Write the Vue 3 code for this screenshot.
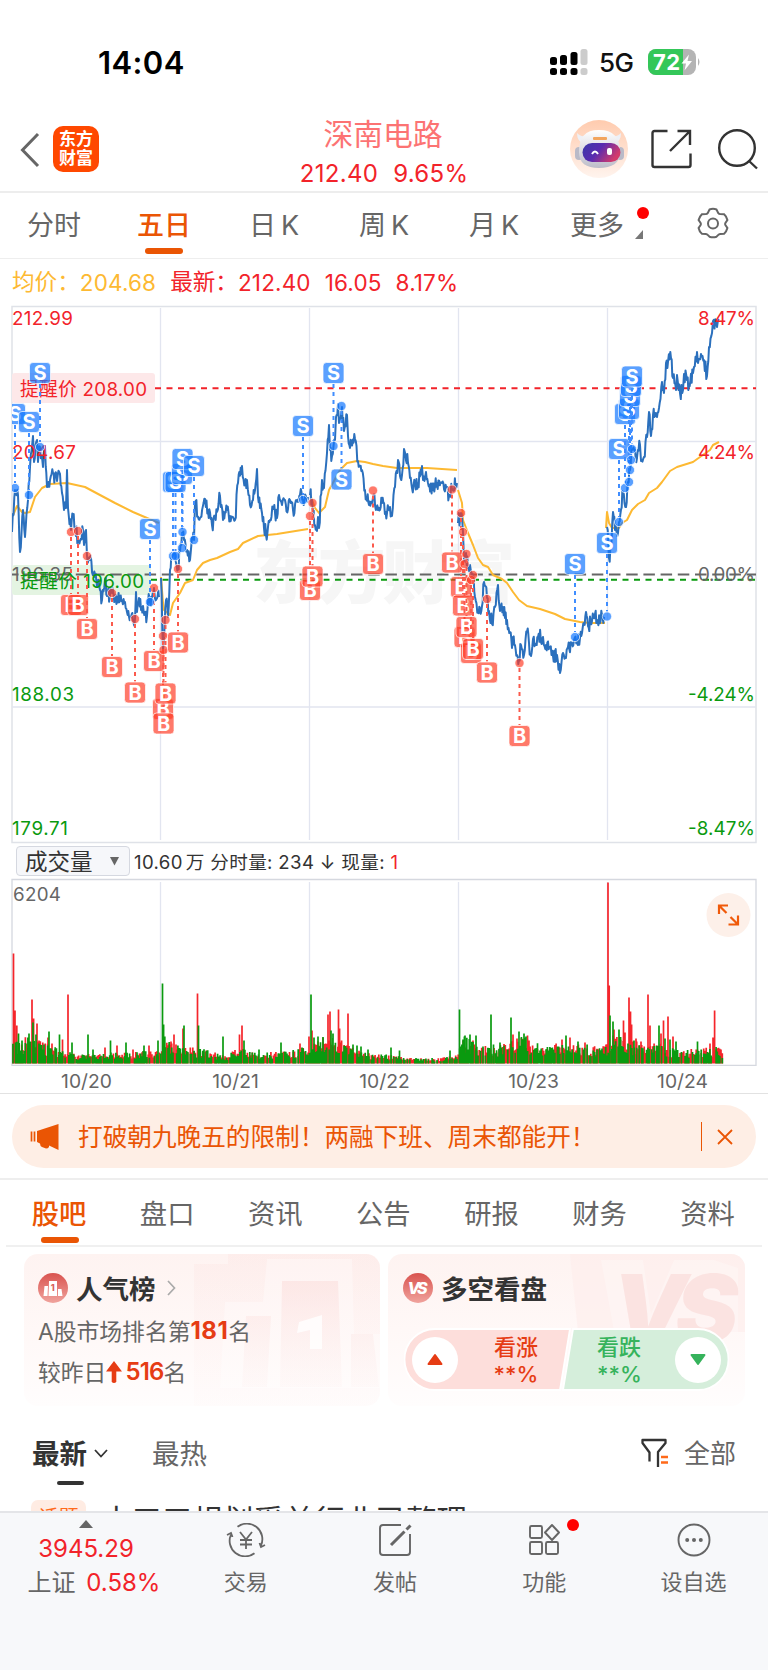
<script setup>
import { ref } from 'vue';

const chartTabs = ['分时', '五日', '日K', '周K', '月K', '更多'];
const activeChart = ref('五日');

const infoTabs = ['股吧', '盘口', '资讯', '公告', '研报', '财务', '资料'];
const activeInfo = ref('股吧');

const dates = ['10/20', '10/21', '10/22', '10/23', '10/24'];
const dayLines = [160.5, 309.5, 458.5, 607.5];

// 固定种子，保证每次绘制一致
const createRandom = (seed) => () => {
  seed = (seed * 16807) % 2147483647;
  return seed / 2147483647;
};

// 每日价格关键点
const priceDays = [
  '12,532 15,490 18,495 20,552 23,510 25,537 28,500 30,467 33,436 34,462 37,440 38,462 40,447 43,467 45,446 47,487 50,480 53,473 57,481 60,474 62,493 64,510 66,508 67,470 68,508 71,530 73,515 78,540 83,530 84,545 86,530 87,556 90,560 95,577 100,590 102,600 105,579 107,596 112,593 115,598 120,597 125,602 127,612 131,617 135,619 136,592 137,612 139,598 141,610 147,616 148,602 152,598 154,588 156,600 159,597',
  '161,578 163,650 166,600 168,617 170,570 172,557 175,553 178,568 182,533 184,540 187,550 190,560 192,537 194,540 195,503 200,518 205,499 208,510 212,525 215,517 220,496 223,520 227,510 230,516 235,520 238,483 242,466 245,485 247,480 250,505 253,500 257,469 258,497 262,513 266,535 270,520 273,509 277,518 279,495 282,505 285,500 288,509 290,500 293,510 298,502 300,495 303,500 308,497',
  '310,495 312,500 313,513 317,531 318,517 319,528 322,480 324,488 327,453 329,425 330,450 332,456 335,440 336,417 338,404 339,423 342,407 344,431 347,415 348,436 350,448 355,439 358,461 362,470 365,490 369,505 373,497 378,510 382,503 387,513 390,507 392,516 395,487 398,460 400,476 402,475 404,449 408,463 412,488 415,482 418,483 422,466 423,480 426,472 428,483 433,490 437,483 442,483 447,487 449,496 452,488 457,483',
  '458,523 461,513 463,532 464,560 466,553 468,568 470,565 473,575 475,597 478,611 482,606 484,582 487,598 489,611 492,624 495,607 498,585 500,611 503,607 505,618 507,620 510,632 512,648 513,637 517,655 519,660 521,645 524,655 527,632 529,643 531,656 533,639 536,645 538,637 543,637 546,645 550,647 553,656 557,655 560,673 563,653 566,658 568,647 572,643 574,640 577,643 580,638 582,633 586,612 588,626 592,621 595,614 597,620 602,615 604,617',
  '607,527 609,558 611,547 613,512 615,530 618,533 619,522 623,493 626,507 628,482 630,470 632,450 635,450 637,458 640,445 641,461 644,457 647,437 649,412 651,436 653,415 657,417 659,408 662,382 664,393 666,363 671,358 673,378 676,390 677,375 680,393 683,390 684,374 687,380 689,385 693,373 694,367 697,352 698,363 701,354 704,360 707,376 709,347 712,333 713,321 716,322 717,327 719,320',
];

const averageDays = [
  '12,517 14,513 17,506 22,512 25,513 30,512 35,497 42,488 50,484 67,483 85,487 100,495 115,503 133,512 147,518 159,523',
  '161,577 163,603 164,610 170,615 173,603 180,593 185,583 193,580 197,570 203,563 210,560 217,558 230,552 238,549 243,543 258,536 277,534 308,529',
  '311,497 315,508 319,513 325,507 329,490 340,470 347,463 357,461 365,462 373,464 383,466 397,468 427,468 457,470',
  '458,490 462,503 463,520 468,533 473,545 478,558 483,565 488,567 493,575 502,579 507,583 513,592 519,600 527,606 540,609 555,614 565,619 580,622 590,623 605,623',
  '606,528 607,512 609,523 612,528 619,528 622,523 627,520 632,510 638,504 645,500 649,493 657,488 662,482 670,471 677,467 693,462 700,457 710,450 713,445 719,442',
];

const parsePoints = (text) => text.split(' ').map((p) => p.split(',').map(Number));

// 在关键点之间补充分钟级波动
const pricePaths = priceDays.map((day, index) => {
  const random = createRandom(97 + index * 31);
  const points = parsePoints(day);
  const result = [points[0]];
  for (let i = 1; i < points.length; i++) {
    const [x0, y0] = points[i - 1];
    const [x1, y1] = points[i];
    const steps = Math.max(1, Math.round((x1 - x0) / 0.7));
    for (let s = 1; s < steps; s++) {
      const t = s / steps;
      const jitter = (random() - 0.5) * 15;
      result.push([x0 + (x1 - x0) * t, y0 + (y1 - y0) * t + jitter]);
    }
    result.push([x1, y1]);
  }
  return result.map(([x, y]) => `${x.toFixed(1)},${y.toFixed(1)}`).join(' ');
});

// 买卖点: [x, 标签y, 圆点y]
const sellMarks = [
  [15, 414, 488], [29, 422, 495], [40, 373, 447], [150, 529, 602],
  [173, 482, 556], [175.5, 482, 556], [182, 474, 548], [182.5, 459, 532], [194, 466, 540],
  [303, 426, 500], [333.5, 373, 446], [341.5, 479.5, 406],
  [575, 564, 637], [607, 543, 616.5], [619, 449, 522],
  [625, 414, 488], [629, 409, 482], [630, 396, 470], [631, 386, 460], [632, 376.5, 449],
];
const buyMarks = [
  [71, 605, 532], [78, 605, 531], [87, 629, 556], [112, 667, 593], [135, 692.5, 619],
  [154, 661, 588], [163, 709, 636], [163.5, 723.5, 650], [165.5, 693.5, 620], [178, 642.5, 569],
  [310, 590, 516], [312.5, 576.5, 503], [373, 564, 490.5], [452, 562.5, 489.5],
  [461, 587, 513], [463, 605.5, 532], [464.5, 637, 564], [466.5, 627, 554],
  [471, 653, 580], [473, 649, 575], [487, 672.5, 599], [519.5, 736, 663],
];

// 成交量峰值: [x, 高度]
const redSpikes = [
  [13.5, 110], [15, 53], [16.8, 38], [32, 64], [33.6, 45], [37, 40], [48, 26], [52, 20], [62.5, 24], [68, 69],
  [105, 16], [117, 18], [133, 14], [149, 18], [171, 22], [174, 29], [176, 19], [183, 35], [197.5, 70],
  [239.5, 29], [242, 38], [300, 20], [309, 27], [312, 33], [323, 26], [328, 49], [330, 52], [338.5, 54], [339.6, 35], [348, 50],
  [513, 29], [517, 25], [527.5, 28], [529, 23], [562, 24], [570, 26], [585, 21], [606, 19],
  [608, 181], [609.2, 78], [614, 34], [623.5, 43], [625, 31], [629, 66], [630.5, 52], [631.6, 39], [636, 25], [641, 22],
  [648, 69], [650, 38], [661, 30], [663.5, 43], [668, 47], [673, 27], [710, 20], [713, 26], [714.6, 53], [716, 14], [721, 14],
];
const greenSpikes = [
  [18.5, 30], [22, 23], [29, 30], [33, 41], [36, 29], [49, 32], [59.5, 29], [72, 21], [88, 29], [93, 14], [110.5, 23], [126, 21],
  [144, 18], [158, 23], [162.5, 80], [163.6, 39], [164.8, 27], [184, 38], [198.5, 38], [223, 27], [244, 23], [259, 14], [281, 21], [302, 16],
  [311, 69], [314, 26], [318, 27], [331, 33], [333, 30], [353, 19], [357, 18], [361, 17], [368, 14], [391, 16], [399.5, 13], [450, 13],
  [459.5, 54], [463, 24], [465, 28], [470, 29], [476, 28], [491, 49], [493.5, 19], [500, 21], [511, 46], [519, 32], [524, 30], [526, 27],
  [566, 28], [578, 22], [610, 48], [613, 42], [619, 34], [634, 23], [659, 38], [665, 25], [670, 24], [676, 22], [697.5, 22],
];
// 各时段平均量
const volumeLevels = parsePoints(
  '12,22 30,25 45,19 60,13 80,8 110,10 140,12 160,12 166,21 180,16 200,15 225,7 240,15 260,9 290,13 309,15 322,26 340,22 360,11 390,8 420,5 440,5 457,8 464,25 490,14 505,18 520,25 545,18 570,19 605,16 612,28 635,20 655,20 680,13 700,14 718,16 724,10'
);

const levelAt = (x) => {
  const i = volumeLevels.findIndex((p) => p[0] > x);
  const [x0, y0] = volumeLevels[i - 1];
  const [x1, y1] = volumeLevels[i];
  return y0 + ((y1 - y0) * (x - x0)) / (x1 - x0);
};

const bar = (x, h) => `M${x.toFixed(1)} 1063.5V${(1063.5 - h).toFixed(1)}`;

const buildBars = (seed, density, spikes) => {
  const random = createRandom(seed);
  let path = '';
  for (let x = 13; x < 722.5; x += 1.24) {
    const value = random();
    const height = random();
    if (value < density) {
      path += bar(x, levelAt(x) * (0.4 + height * 0.7));
    }
  }
  return path + spikes.map(([x, h]) => bar(x, h)).join('');
};
const redBars = buildBars(811, 0.92, redSpikes);
const greenBars = buildBars(4027, 0.72, greenSpikes);
</script>

<template>
  <div class="page">
    <div class="status-bar">
      <span class="clock">14:04</span>
      <div class="status-right">
        <svg width="38" height="28" viewBox="0 0 38 28">
          <g fill="#000">
            <rect x="0" y="9" width="7" height="8" rx="2.5" />
            <rect x="10" y="7" width="7" height="10" rx="2.5" />
            <rect x="20.5" y="4" width="7" height="13" rx="2.5" />
            <rect x="0" y="20" width="7" height="7" rx="2.5" />
            <rect x="10" y="20" width="7" height="7" rx="2.5" />
            <rect x="20.5" y="20" width="7" height="7" rx="2.5" />
          </g>
          <g fill="#ccc">
            <rect x="30.5" y="1" width="7" height="16" rx="2.5" />
            <rect x="30.5" y="20" width="7" height="7" rx="2.5" />
          </g>
        </svg>
        <span class="network">5G</span>
        <svg width="54" height="28" viewBox="0 0 54 28">
          <rect x="0" y="1" width="48" height="26" rx="8" fill="#b4b4b4" />
          <path d="M8 1h27v26H8a8 8 0 0 1-8-8V9a8 8 0 0 1 8-8z" fill="#34c759" />
          <path d="M50 10q3 4 0 8z" fill="#b4b4b4" />
          <text x="5" y="21.5" class="battery-text" textLength="27">72</text>
          <path d="M41 6.5 33.5 15.5h4.5l-1.5 7 7.5-9.5h-4.5z" fill="#fff" />
        </svg>
      </div>
    </div>

    <header class="header">
      <svg class="back" width="22" height="36" viewBox="0 0 22 36">
        <path d="M19 2 3.5 18 19 34" fill="none" stroke="#666" stroke-width="3" />
      </svg>
      <div class="brand"><span>东方</span><span>财富</span></div>
      <div class="stock">
        <div class="stock-name">深南电路</div>
        <div class="stock-price"><span>212.40</span><span>9.65%</span></div>
      </div>
      <div class="header-actions">
        <svg width="58" height="58" viewBox="0 0 58 58">
          <defs>
            <linearGradient id="robotBg" x1="0" y1="0" x2="0" y2="1">
              <stop offset="0" stop-color="#ffcbae" />
              <stop offset="1" stop-color="#fff4ee" />
            </linearGradient>
            <linearGradient id="robotFace" x1="0" y1="0" x2="1" y2="0.4">
              <stop offset="0" stop-color="#3a3aa8" />
              <stop offset="0.5" stop-color="#5a2bb0" />
              <stop offset="1" stop-color="#d23a6c" />
            </linearGradient>
            <linearGradient id="robotHead" x1="0" y1="0" x2="0" y2="1">
              <stop offset="0" stop-color="#fff" />
              <stop offset="1" stop-color="#bdbdc9" />
            </linearGradient>
          </defs>
          <circle cx="29" cy="29" r="29" fill="url(#robotBg)" />
          <path d="M7 13q0 8 6 10l6-8q-8 3-12-2zM51 13q0 8-6 10l-6-8q8 3 12-2z" fill="#eef0f6" />
          <rect x="5" y="27" width="8" height="13" rx="4" fill="#b9bac8" />
          <rect x="46" y="27" width="8" height="13" rx="4" fill="#b9bac8" />
          <path d="M9 32c0-15 6-22 20-22s21 7 21 22c0 11-8 16-21 16S9 43 9 32z" fill="url(#robotHead)" />
          <rect x="12.500" y="23" width="38" height="19" rx="9.500" fill="url(#robotFace)" />
          <rect x="23" y="17" width="14" height="3" rx="1" fill="#f2a55e" />
          <path d="M22 34q3-5 6 0" fill="none" stroke="#fff" stroke-width="2" />
          <rect x="37" y="28" width="5" height="7" rx="2" fill="#fff" />
        </svg>
        <svg class="share" width="42" height="42" viewBox="0 0 42 42" fill="none" stroke="#333" stroke-width="2.4">
          <path d="M17.500 3H4.500q-2 0-2 2v32q0 2 2 2h34q2 0 2-2V25.500" />
          <path d="M27.500 3h12.500v14M40 3 20 23" />
        </svg>
        <svg class="search" width="42" height="42" viewBox="0 0 42 42" fill="none" stroke="#333" stroke-width="2.4">
          <circle cx="20" cy="20" r="17.8" />
          <path d="m31.500 32.500 8.500 8" />
        </svg>
      </div>
    </header>

    <nav class="chart-tabs">
      <div
        v-for="tab in chartTabs"
        :key="tab"
        :class="['chart-tab', { active: activeChart === tab }]"
        @click="activeChart = tab"
      >
        <span v-if="tab.endsWith('K')">{{ tab[0] }}<i>K</i></span>
        <span v-else>{{ tab }}</span>
        <template v-if="tab === '更多'">
          <b class="more-dot"></b>
          <svg class="more-arrow" width="8" height="9" viewBox="0 0 8 9"><path d="M8 0v9H0z" fill="#777" /></svg>
        </template>
      </div>
      <div class="chart-tab">
        <svg width="32" height="32" viewBox="0 0 32 32" fill="none" stroke="#666" stroke-width="2">
          <path d="M12.500 2.500q3.500-1.300 7 0l1.800 3.600q.7.900 1.800 1l4 .2q2.600 2.300 3.300 5.700l-2 3q-.5 1 0 2l2 3q-.9 3.500-3.300 5.700l-4 .2q-1.100.1-1.800 1l-1.800 1.800q-3.500 1.300-7 0l-1.800-1.800q-.7-.9-1.800-1l-4-.2Q2.300 24.500 1.600 21l2-3q.5-1 0-2l-2-3Q2.500 9.600 4.900 7.300l4-.2q1.100-.1 1.800-1z" />
          <circle cx="16" cy="16.500" r="5" />
        </svg>
      </div>
    </nav>

    <div class="quote-row">
      <span class="label avg">均价：</span><span class="avg num">204.68</span>
      <span class="label now">最新：</span><span class="now num">212.40</span>
      <span class="now num">16.05</span><span class="now num">8.17%</span>
    </div>

    <svg class="price-chart" width="768" height="544" viewBox="0 300 768 544">
      <defs>
        <clipPath id="plot"><rect x="12" y="306" width="744" height="537" /></clipPath>
      </defs>
      <text x="253" y="598" class="watermark" textLength="262">东方财富</text>
      <path d="M12 306.500H756V842.500H12z" fill="none" stroke="#dfe2e8" stroke-width="1.500" />
      <path v-for="x in dayLines" :key="x" :d="`M${x} 308V840`" stroke="#e2e5f0" stroke-width="1.300" />
      <path d="M12 441.500H756M12 707H756" stroke="#e2e5f0" stroke-width="1.500" />

      <rect x="12" y="373" width="143" height="30" rx="3" fill="#fde8e9" />
      <rect x="12" y="565" width="139" height="30" rx="3" fill="#e4f4e2" />
      <path d="M12 574.500H756" stroke="#666" stroke-width="2" stroke-dasharray="11.500 5.700" stroke-dashoffset="5" />
      <path d="M155 388.300H756" stroke="#f2232a" stroke-width="2" stroke-dasharray="6 5.500" />
      <path d="M151 579.800H756" stroke="#0a9a0f" stroke-width="2" stroke-dasharray="6 5.500" />

      <g clip-path="url(#plot)" fill="none" stroke-linejoin="round">
        <polyline v-for="(day, i) in averageDays" :key="'a' + i" :points="day" stroke="#fdb932" stroke-width="2" />
        <polyline v-for="(day, i) in pricePaths" :key="'p' + i" :points="day" stroke="#2b70bd" stroke-width="2" />
      </g>

      <g class="axis red">
        <text x="12" y="325" textLength="61">212.99</text>
        <text x="12" y="459" textLength="64">204.67</text>
        <text x="755" y="325" text-anchor="end" textLength="57">8.47%</text>
        <text x="755" y="459" text-anchor="end" textLength="57">4.24%</text>
        <text x="20" y="396" textLength="127">提醒价 208.00</text>
      </g>
      <g class="axis gray">
        <text x="12" y="580.500" textLength="61">196.35</text>
        <text x="755" y="580.500" text-anchor="end" textLength="57">0.00%</text>
      </g>
      <g class="axis green">
        <text x="20" y="588" textLength="124">提醒价 196.00</text>
        <text x="12" y="701" textLength="62">188.03</text>
        <text x="12" y="835" textLength="56">179.71</text>
        <text x="755" y="701" text-anchor="end" textLength="67">-4.24%</text>
        <text x="755" y="835" text-anchor="end" textLength="67">-8.47%</text>
      </g>

      <g clip-path="url(#plot)">
        <g v-for="([x, y, dot], i) in buyMarks" :key="'b' + i" class="mark buy">
          <path :d="`M${x} ${dot + 5}V${y - 11}`" />
          <circle :cx="x" :cy="dot" r="4.600" />
          <rect :x="x - 10.500" :y="y - 10.500" width="21" height="21" rx="3.500" />
          <text :x="x" :y="y + 7.300">B</text>
        </g>
        <g v-for="([x, y, dot], i) in sellMarks" :key="'s' + i" class="mark sell">
          <path :d="y < dot ? `M${x} ${y + 11}V${dot - 5}` : `M${x} ${dot + 5}V${y - 11}`" />
          <circle :cx="x" :cy="dot" r="4.600" />
          <rect :x="x - 10.500" :y="y - 10.500" width="21" height="21" rx="3.500" />
          <text :x="x" :y="y + 7.300">S</text>
        </g>
      </g>
    </svg>

    <div class="volume-row">
      <div class="volume-select">
        <span>成交量</span>
        <svg width="9" height="9" viewBox="0 0 9 9"><path d="M0 0h9L4.500 8.500z" fill="#666" /></svg>
      </div>
      <div class="volume-info">10.60<span class="unit">万</span> 分时量: 234 ↓ 现量: <em>1</em></div>
    </div>

    <svg class="volume-chart" width="768" height="188" viewBox="0 878 768 188">
      <path d="M12 879.500H756V1065.300H12z" fill="none" stroke="#d5d8df" stroke-width="1.300" />
      <path v-for="x in dayLines" :key="x" :d="`M${x} 882V1063`" stroke="#e2e5f0" stroke-width="1.300" />
      <path :d="redBars" stroke="#f5252b" stroke-width="1.700" />
      <path :d="greenBars" stroke="#0a9a0f" stroke-width="1.700" />
      <text x="13" y="900.500" class="volume-max" textLength="48">6204</text>
      <circle cx="728.500" cy="915" r="22" fill="#fdf0e9" />
      <path d="M719 914V905.500h9M719 905.500l7.500 7.500M738 915.500v9h-9.500M738 924.500l-7.500-7.500" fill="none" stroke="#f05a0a" stroke-width="2.200" />
    </svg>

    <div class="date-row">
      <span v-for="date in dates" :key="date">{{ date }}</span>
    </div>

    <div class="banner-wrap">
      <div class="banner">
        <svg width="30" height="28" viewBox="0 0 30 28">
          <path d="M7 8 28.500 1v26L19 22.500V24q-1 1.500-3 1.500l-4-1.500q-2-1-2-3.500L7 19z" fill="#ea5504" />
          <path d="M1.500 8.500v10M4.500 8.500v10" stroke="#ea5504" stroke-width="1.700" />
        </svg>
        <span class="banner-text">打破朝九晚五的限制！两融下班、周末都能开！</span>
        <i class="banner-divider"></i>
        <svg width="16" height="16" viewBox="0 0 16 16"><path d="m1 1 14 14M15 1 1 15" stroke="#ea5504" stroke-width="1.800" /></svg>
      </div>
    </div>

    <nav class="info-tabs">
      <div
        v-for="tab in infoTabs"
        :key="tab"
        :class="['info-tab', { active: activeInfo === tab }]"
        @click="activeInfo = tab"
      >{{ tab }}</div>
    </nav>

    <div class="cards">
      <section class="card rank-card">
        <svg class="card-art" width="356" height="152" viewBox="0 0 356 152">
          <defs>
            <linearGradient id="artFade" x1="0" y1="0" x2="0" y2="1">
              <stop offset="0" stop-color="#fbdcda" stop-opacity="0.55" />
              <stop offset="1" stop-color="#fdeceb" stop-opacity="0.2" />
            </linearGradient>
          </defs>
          <path d="M170 10h34V0h153v152H170z" fill="url(#artFade)" opacity="0.45" />
          <path d="M201 48h38l4-43h85l2 75h27v54H196z" fill="#fff" opacity="0.35" />
          <path d="M222 62h25l-4 71h-25zM258 27h56l4 106h-62zM327 80h22l6 53h-28z" fill="url(#artFade)" />
          <path d="M275 68 298 61v34h-12V76l-13 3z" fill="#fff" opacity="0.8" />
        </svg>
        <div class="card-title">
          <svg width="30" height="30" viewBox="0 0 30 30">
            <defs>
              <linearGradient id="iconRed" x1="0" y1="0" x2="0" y2="1">
                <stop offset="0" stop-color="#d9534f" />
                <stop offset="1" stop-color="#f0a39d" />
              </linearGradient>
            </defs>
            <circle cx="15" cy="15" r="15" fill="url(#iconRed)" />
            <path d="M6.500 13H10l-.5 10H5.500zM11 8h8v15h-8.500zM20 16h3.500l1 7H20z" fill="#fff" />
            <text x="12.700" y="18" class="icon-one">1</text>
          </svg>
          <h3>人气榜</h3>
          <svg class="title-arrow" width="9" height="16" viewBox="0 0 9 16"><path d="m1 1 6.500 7L1 15" fill="none" stroke="#aaa" stroke-width="1.700" /></svg>
        </div>
        <p>A股市场排名第<strong>181</strong>名</p>
        <p>较昨日<svg width="16" height="22" viewBox="0 0 16 22"><path d="M8 0 16 10.500h-5.700V21q-2.300 2-4.600 0V10.500H0z" fill="#e63c14" /></svg><strong class="up">516</strong>名</p>
      </section>

      <section class="card vote-card">
        <svg class="card-art" width="357" height="152" viewBox="0 0 357 152">
          <path d="M182 0h175v78H190z" fill="#fdeceb" opacity="0.6" />
          <path d="M213 6h42l8 54 23-54h40l24 8v64h-46l-50-1h-28z" fill="#fff" opacity="0.25" />
          <text x="224" y="88" class="art-vs" textLength="126">VS</text>
        </svg>
        <div class="card-title">
          <svg width="30" height="30" viewBox="0 0 30 30">
            <circle cx="15" cy="15" r="15" fill="url(#iconRed)" />
            <text x="14.500" y="21" text-anchor="middle" class="icon-vs" textLength="20">VS</text>
          </svg>
          <h3>多空看盘</h3>
        </div>
        <div class="vote">
          <svg class="vote-bg" width="325" height="63" viewBox="0 0 325 63">
            <path d="M31 1H166L156 62H31A30.500 30.500 0 0 1 31 1z" fill="#fddedb" stroke="#fff" stroke-width="1.800" />
            <path d="M169 1H294A30.500 30.500 0 0 1 294 62H159z" fill="#d5eedb" stroke="#fff" stroke-width="1.800" />
          </svg>
          <span class="vote-button"><svg width="16" height="13" viewBox="0 0 16 13"><path d="M8 2 14.500 11h-13z" fill="#e63c14" stroke="#e63c14" stroke-width="2" stroke-linejoin="round" /></svg></span>
          <span class="vote-text bull">看涨<br />**%</span>
          <span class="vote-text bear">看跌<br />**%</span>
          <span class="vote-button"><svg width="16" height="13" viewBox="0 0 16 13"><path d="M8 11 14.500 2h-13z" fill="#36b35c" stroke="#36b35c" stroke-width="2" stroke-linejoin="round" /></svg></span>
        </div>
      </section>
    </div>

    <div class="feed-tabs">
      <span class="feed-active">最新</span>
      <svg class="feed-arrow" width="14" height="9" viewBox="0 0 14 9"><path d="m1 1 6 6.500L13 1" fill="none" stroke="#333" stroke-width="1.800" /></svg>
      <span class="feed-hot">最热</span>
      <svg class="feed-filter" width="28" height="30" viewBox="0 0 28 30" fill="none">
        <path d="M8.500 23.500V14.500L1.500 5V2h23v3L17 14v15" stroke="#333" stroke-width="2.300" stroke-linejoin="round" />
        <path d="M20 19h7M20 24.500h7" stroke="#ff6a1a" stroke-width="2.600" />
      </svg>
      <span class="feed-all">全部</span>
    </div>

    <div class="feed-item">
      <span class="feed-tag">话题</span>
      <span class="feed-title">十五五规划受益行业已整理</span>
    </div>

    <footer class="bottom-bar">
      <div class="index-cell">
        <svg width="14" height="8" viewBox="0 0 14 8"><path d="M7 0l7 8H0z" fill="#666" /></svg>
        <span class="index-value">3945.29</span>
        <span class="index-name">上证 <em>0.58%</em></span>
      </div>
      <div class="nav-cell">
        <svg width="40" height="34" viewBox="0 0 40 34" fill="none" stroke="#666" stroke-width="1.800">
          <path d="M11.500 3.800A15.500 15.500 0 0 1 35 22.500M28.500 30.200A15.500 15.500 0 0 1 5 11.500M1 12l4-2 1.500 4M39 22l-4 2-1.500-4" />
          <path d="m14 9 6 7.500L26 9M20 16.500V26M14 17h12M14 21.500h12" />
        </svg>
        <span>交易</span>
      </div>
      <div class="nav-cell">
        <svg width="34" height="34" viewBox="0 0 34 34" fill="none" stroke="#666" stroke-width="1.900">
          <path d="M23 2H5Q2 2 2 5v24q0 3 3 3h24q3 0 3-3V11" />
          <path d="M13 22 26.500 8.500M28.500 6.500l4-4" stroke-width="3" />
        </svg>
        <span>发帖</span>
      </div>
      <div class="nav-cell">
        <svg width="34" height="34" viewBox="0 0 34 34" fill="none" stroke="#666" stroke-width="1.900">
          <rect x="3" y="3" width="12" height="12" rx="1.500" />
          <rect x="3" y="19" width="12" height="12" rx="1.500" />
          <rect x="19" y="19" width="12" height="12" rx="1.500" />
          <path d="m25 2 7 7.500-7 7.500-7-7.500z" stroke-linejoin="round" />
        </svg>
        <b class="nav-dot"></b>
        <span>功能</span>
      </div>
      <div class="nav-cell">
        <svg width="34" height="34" viewBox="0 0 34 34">
          <circle cx="17" cy="17" r="15.500" fill="none" stroke="#666" stroke-width="1.900" />
          <g fill="#666"><circle cx="10.200" cy="17" r="2" /><circle cx="17" cy="17" r="2" /><circle cx="23.800" cy="17" r="2" /></g>
        </svg>
        <span>设自选</span>
      </div>
    </footer>
  </div>
</template>

<style>
body {
  background: #fff;
}
</style>

<style scoped>
.page {
  width: 768px;
  height: 1670px;
  overflow: hidden;
  background: #fff;
  color: #666;
  font-family: Inter, "Noto Sans CJK SC", sans-serif;
}

.page * {
  box-sizing: border-box;
}

svg {
  display: block;
  flex: none;
}

i,
em {
  font-style: normal;
}

/* 状态栏 */
.status-bar {
  height: 114px;
  padding: 11px 66px 0 98px;
  display: flex;
  align-items: center;
  justify-content: space-between;
}

.clock {
  font-size: 31px;
  font-weight: 600;
  color: #000;
  letter-spacing: 0.4px;
}

.status-right {
  margin-top: -2px;
  display: flex;
  align-items: center;
}

.network {
  margin: 2px 13px 0 11px;
  width: 36px;
  font-size: 26px;
  font-weight: 500;
  letter-spacing: -0.5px;
  color: #111;
}

.battery-text {
  font-size: 22px;
  font-weight: 700;
  fill: #fff;
}

/* 顶部标题 */
.header {
  height: 79px;
  padding: 6px 9px 0 19px;
  display: flex;
  align-items: flex-start;
  border-bottom: 2px solid #ededed;
}

.back {
  margin-top: 12px;
}

.brand {
  width: 46px;
  height: 46px;
  margin: 6px 0 0 12px;
  border-radius: 10px;
  background: #ff4800;
  color: #fff;
  font-size: 17px;
  font-weight: 700;
  line-height: 19px;
  display: flex;
  flex-direction: column;
  align-items: center;
  justify-content: center;
}

.stock {
  width: 200px;
  margin-left: 185px;
  text-align: center;
}

.stock-name {
  height: 40px;
  margin-left: -2px;
  line-height: 28px;
  font-size: 29.8px;
  color: #fc7373;
}

.stock-price {
  display: flex;
  justify-content: center;
  gap: 15px;
  height: 28px;
  line-height: 28px;
  font-size: 24px;
  letter-spacing: 0.3px;
  color: #f2232a;
}

.header-actions {
  margin-left: auto;
  display: flex;
  align-items: center;
}

.share {
  margin-left: 22px;
}

.search {
  margin-left: 25px;
}

/* 周期切换 */
.chart-tabs {
  height: 66px;
  display: grid;
  grid-template-columns: repeat(7, 110px);
  border-bottom: 1px solid #eee;
}

.chart-tab {
  position: relative;
  display: flex;
  align-items: center;
  justify-content: center;
  padding: 0 2px 5px 0;
  font-size: 27px;
}

.chart-tab:nth-child(6) {
  padding-right: 16px;
}

.chart-tab:last-child {
  padding-right: 5px;
}

.chart-tab i {
  margin-left: 5px;
}

.chart-tab.active {
  color: #ea5504;
  font-weight: 500;
}

.chart-tab.active::after {
  content: "";
  position: absolute;
  left: 35px;
  bottom: 4px;
  width: 38px;
  height: 6px;
  border-radius: 3px;
  background: #ea5504;
}

.more-dot {
  position: absolute;
  left: 87px;
  top: 14px;
  width: 12px;
  height: 12px;
  border-radius: 50%;
  background: #f00;
}

.more-arrow {
  position: absolute;
  left: 85px;
  top: 37px;
}

/* 行情摘要 */
.quote-row {
  height: 41px;
  padding: 3px 0 0 12px;
  display: flex;
  align-items: center;
  font-size: 22.6px;
  white-space: nowrap;
}

.quote-row .num {
  margin: 3px 14px 0 0;
  font-size: 22.5px;
  letter-spacing: 0.15px;
}

.quote-row .label {
  height: 33px;
  line-height: 33px;
}

.avg {
  color: #fdb932;
}

.now {
  color: #f2232a;
}

/* 走势图 */
.watermark {
  font-size: 68px;
  font-weight: 900;
  fill: #f6f6f6;
}

.axis text {
  font-size: 18.8px;
}

.axis.red {
  fill: #f2232a;
}

.axis.green {
  fill: #0a9a0f;
}

.axis.gray {
  fill: #666;
}

.mark path {
  fill: none;
  stroke-width: 2;
  stroke-dasharray: 4 4;
}

.mark circle,
.mark rect {
  stroke: #fff;
  stroke-width: 1;
  stroke-opacity: 0.7;
}

.mark text {
  fill: #fff;
  font-size: 20px;
  font-weight: 700;
  text-anchor: middle;
}

.buy path {
  stroke: #fb5a4c;
}

.buy circle,
.buy rect {
  fill: #ff3a24;
  fill-opacity: 0.68;
}

.sell path {
  stroke: #3f8dff;
}

.sell circle,
.sell rect {
  fill: #1478ff;
  fill-opacity: 0.7;
}

/* 成交量 */
.volume-row {
  height: 34px;
  padding: 2px 0 2px 16px;
  display: flex;
  align-items: center;
}

.volume-select {
  width: 114px;
  height: 30px;
  padding: 0 10px 0 8px;
  display: flex;
  align-items: center;
  justify-content: space-between;
  border: 1px solid #d5d8e0;
  border-radius: 4px;
  background: #f6f7fa;
  color: #333;
  font-size: 22.5px;
}

.volume-select span {
  margin-top: -3px;
}

.volume-info {
  margin: -2px 0 0 4px;
  font-size: 18.6px;
  letter-spacing: 0.35px;
  color: #333;
  white-space: pre;
}

.volume-info .unit {
  margin-left: 3px;
}

.volume-info em {
  color: #f2232a;
}

.volume-max {
  font-size: 18.8px;
  fill: #666;
}

.date-row {
  height: 28px;
  padding-left: 12px;
  display: grid;
  grid-template-columns: repeat(5, 149px);
  border-bottom: 1px solid #e2e2e2;
  line-height: 30px;
  font-size: 19.3px;
  text-align: center;
}

/* 活动横幅 */
.banner-wrap {
  height: 86px;
  padding: 11px 12px 0;
  border-bottom: 2px solid #eee;
}

.banner {
  height: 63px;
  padding: 0 23px 0 18px;
  display: flex;
  align-items: center;
  border-radius: 32px;
  background: #feeee5;
  color: #ea5504;
}

.banner-text {
  margin: -3px 0 0 18px;
  font-size: 24.65px;
  white-space: nowrap;
}

.banner-divider {
  width: 1.5px;
  height: 29px;
  margin-left: auto;
  margin-right: 15px;
  background: #ea5504;
}

/* 资讯切换 */
.info-tabs {
  height: 67px;
  margin: 0 6px;
  display: grid;
  grid-template-columns: repeat(7, 108.1px);
  border-bottom: 2px solid #f0f0f0;
}

.info-tab {
  position: relative;
  padding: 15px 2px 0 0;
  line-height: 40px;
  font-size: 27.3px;
  text-align: center;
}

.info-tab.active {
  color: #ea5504;
  font-weight: 500;
}

.info-tab.active::after {
  content: "";
  position: absolute;
  left: 35px;
  bottom: 2px;
  width: 38px;
  height: 6px;
  border-radius: 3px;
  background: #ea5504;
}

/* 卡片 */
.cards {
  height: 160px;
  padding: 7px 23px 0 24px;
  display: grid;
  grid-template-columns: 356px 357px;
  gap: 8px;
}

.card {
  position: relative;
  height: 152px;
  padding: 18px 15px 0;
  overflow: hidden;
  border-radius: 14px;
  background: linear-gradient(180deg, #fef3f1 0%, #fff8f7 50%, #fffdfd 100%);
}

.rank-card {
  padding-left: 14px;
}

.card-art {
  position: absolute;
  left: 0;
  top: 0;
}

.art-vs {
  font-size: 94px;
  font-weight: 900;
  font-style: italic;
  fill: #fbe3e1;
}

.card-title {
  position: relative;
  height: 32px;
  display: flex;
  align-items: center;
}

.card-title h3 {
  margin: -2px 0 0 8px;
  font-size: 26.5px;
  font-weight: 600;
  color: #333;
}

.title-arrow {
  margin-left: 11px;
}

.icon-one {
  font-size: 9px;
  font-weight: 800;
  fill: #d9605c;
}

.icon-vs {
  font-size: 16px;
  font-weight: 800;
  font-style: italic;
  fill: #fff;
}

.card p {
  position: relative;
  height: 41px;
  margin: 0;
  display: flex;
  align-items: center;
  font-size: 22.8px;
}

.card-title + p {
  margin-top: 6px;
}

.card strong {
  font-size: 24px;
  font-weight: 700;
  letter-spacing: 0.5px;
  color: #e63c14;
}

.card strong.up {
  margin-left: 3px;
  font-weight: 600;
  letter-spacing: -0.8px;
}

.vote {
  position: relative;
  width: 325px;
  height: 63px;
  margin: 24px 0 0 1px;
  padding: 0 8px;
  display: grid;
  grid-template-columns: 46px 153px 64px 46px;
  align-items: center;
}

.vote-bg {
  position: absolute;
  left: 0;
  top: 0;
}

.vote-button {
  position: relative;
  width: 46px;
  height: 46px;
  display: flex;
  align-items: center;
  justify-content: center;
  border-radius: 50%;
  background: #fff;
}

.vote-text {
  position: relative;
  padding-top: 2px;
  font-size: 22px;
  line-height: 27px;
  font-weight: 500;
  text-align: center;
}

.bull {
  padding-right: 37px;
  color: #e63c14;
}

.bear {
  padding-right: 46px;
  margin-left: -14px;
  color: #36b35c;
  white-space: nowrap;
}

/* 帖子列表 */
.feed-tabs {
  height: 93px;
  padding: 27px 32px 0 32px;
  display: flex;
  align-items: flex-start;
  font-size: 27.5px;
  line-height: 40px;
}

.feed-active {
  position: relative;
  font-weight: 700;
  color: #333;
}

.feed-active::after {
  content: "";
  position: absolute;
  left: 25px;
  top: 47px;
  width: 27px;
  height: 4px;
  border-radius: 2px;
  background: #333;
}

.feed-arrow {
  margin: 15px 0 0 7px;
}

.feed-hot {
  margin-left: 44px;
}

.feed-filter {
  margin: 4px 15px 0 auto;
}

.feed-all {
  font-size: 26px;
}

.feed-item {
  height: 11px;
  padding-left: 31px;
  display: flex;
  overflow: hidden;
}

.feed-tag {
  width: 55px;
  height: 34px;
  border-radius: 7px;
  background: #ffece3;
  color: #ff6a1a;
  font-size: 20px;
  line-height: 37px;
  text-align: center;
}

.feed-title {
  margin-left: 15px;
  font-size: 30.5px;
  line-height: 42px;
  color: #333;
  white-space: nowrap;
}

/* 底部导航 */
.bottom-bar {
  height: 160px;
  display: grid;
  grid-template-columns: 171px repeat(4, 149.3px);
  border-top: 2px solid #e4e5e8;
  background: #f7f8fa;
}

.index-cell {
  padding: 7px 0 0 17px;
  display: flex;
  flex-direction: column;
  align-items: center;
}

.index-cell svg {
  margin-right: 16px;
}

.index-value {
  margin: 5px 16px 0 0;
  height: 32px;
  line-height: 32px;
  font-size: 24px;
  color: #f2232a;
}

.index-name {
  height: 36px;
  line-height: 36px;
  font-size: 24px;
  white-space: nowrap;
}

.index-name em {
  margin-left: 4px;
  color: #f2232a;
}

.nav-cell {
  position: relative;
  padding-top: 10px;
  display: flex;
  flex-direction: column;
  align-items: center;
}

.nav-cell span {
  margin-top: 8px;
  line-height: 34px;
  font-size: 22px;
}

.nav-dot {
  position: absolute;
  left: 97px;
  top: 6px;
  width: 12px;
  height: 12px;
  border-radius: 50%;
  background: #f00;
}
</style>
